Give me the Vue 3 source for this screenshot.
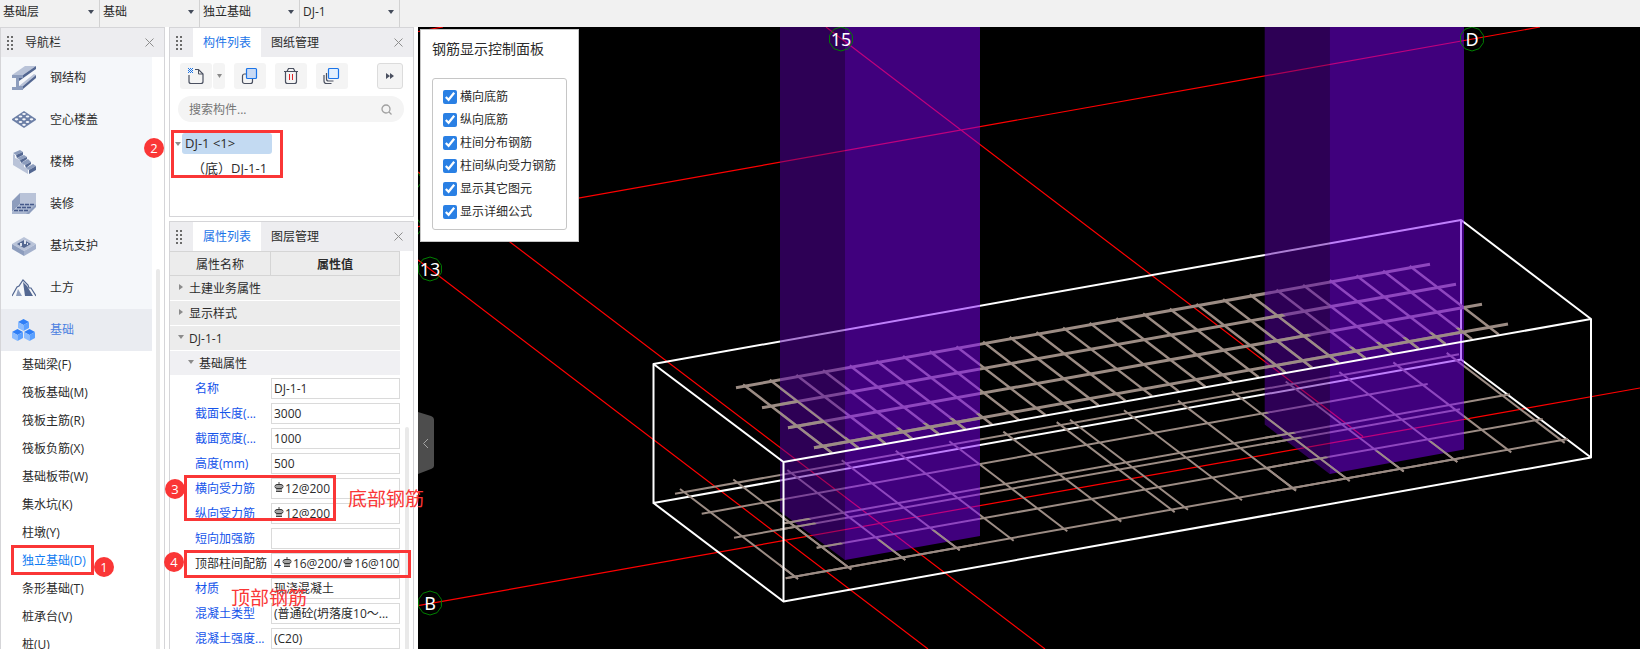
<script setup>
  import { ref } from 'vue'

  const selectors = [
    { label: '楼层', value: '基础层' },
    { label: '构件大类', value: '基础' },
    { label: '构件类型', value: '独立基础' },
    { label: '构件', value: 'DJ-1' },
  ]

  const modules = [
    { icon: 'steel', name: '钢结构' },
    { icon: 'slab', name: '空心楼盖' },
    { icon: 'stairs', name: '楼梯' },
    { icon: 'finish', name: '装修' },
    { icon: 'pit', name: '基坑支护' },
    { icon: 'earth', name: '土方' },
    { icon: 'base', name: '基础' },
  ]

  const elements = [
    '基础梁(F)', '筏板基础(M)', '筏板主筋(R)', '筏板负筋(X)', '基础板带(W)', '集水坑(K)',
    '柱墩(Y)', '独立基础(D)', '条形基础(T)', '桩承台(V)', '桩(U)',
  ]

  const groups = [
    { name: '土建业务属性', open: false },
    { name: '显示样式', open: false },
    { name: 'DJ-1-1', open: true },
    { name: '基础属性', open: true, nested: true },
  ]

  // '#' stands for the rebar grade symbol
  const props = [
    { name: '名称', value: ['DJ-1-1'] },
    { name: '截面长度(...', value: ['3000'] },
    { name: '截面宽度(...', value: ['1000'] },
    { name: '高度(mm)', value: ['500'] },
    { name: '横向受力筋', value: ['#', '12@200'] },
    { name: '纵向受力筋', value: ['#', '12@200'] },
    { name: '短向加强筋', value: [''] },
    { name: '顶部柱间配筋', value: ['4', '#', '16@200/', '#', '16@100'], plain: true },
    { name: '材质', value: ['现浇混凝土'] },
    { name: '混凝土类型', value: ['(普通砼(坍落度10～...'] },
    { name: '混凝土强度...', value: ['(C20)'] },
  ]

  const toggles = ref([
    { name: '横向底筋', on: true },
    { name: '纵向底筋', on: true },
    { name: '柱间分布钢筋', on: true },
    { name: '柱间纵向受力钢筋', on: true },
    { name: '显示其它图元', on: true },
    { name: '显示详细公式', on: true },
  ])

  const activeModule = ref('基础')
  const activeElement = ref('独立基础(D)')

  const axisLines = [
    [418, 260, 928, 649],
    [418, 172, 1045, 649],
    [826, 27, 1363, 436.5],
    [418, 605.7, 1640, 388],
    [418, 226.7, 1540, 27],
    [418, 31.5, 443, 27],
  ]

  const axisMarks = [
    { x: 430, y: 269, text: '13' },
    { x: 430, y: 603, text: 'B' },
    { x: 841, y: 39, text: '15' },
    { x: 1472, y: 39, text: 'D' },
    { x: 409, y: 180, text: '' },
    { x: 409, y: 227, text: '' },
  ]

  const topLong = [
    [736, 387.7, 1430, 264.3],
    [762, 407.7, 1456, 284.3],
    [788, 427.7, 1482, 304.3],
    [814, 447.7, 1508, 324],
  ]

  const topCross = Array.from({ length: 26 }, (_, i) => {
    const x = 743 + i * 26.67
    const y = 384.5 - i * 4.74
    return [x, y, x + 89, y + 68.5]
  })

  const bottomLong = [
    [675, 493.7, 1459, 354.3],
    [701.7, 513.7, 1427.7, 384],
    [734, 537.7, 1460, 409.3],
    [783, 523.5, 1510, 394.3],
    [816.7, 547.7, 1542.7, 419],
    [785.7, 578.3, 1568, 439],
  ]

  const bottomCross = [
    680, 733.3, 787.3, 841.7, 895.7, 949.3, 1003.3, 1056.7,
    1070, 1124, 1178, 1231.7, 1285.7, 1339.3, 1393.3, 1446.7,
  ].map((x) => {
    const y = 489 - (x - 680) * 0.1775
    return [x, y, x + 118, y + 90]
  })

  function toPath(lines) {
    return lines.map(([x1, y1, x2, y2]) => `M${x1} ${y1}L${x2} ${y2}`).join('')
  }

  function ring(cx, cy) {
    return Array.from({ length: 10 }, (_, i) => {
      const a = (i * 36 - 90) * Math.PI / 180
      return `${(cx + 12 * Math.cos(a)).toFixed(1)},${(cy + 12 * Math.sin(a)).toFixed(1)}`
    }).join(' ')
  }
</script>

<template>
  <div class="app">
    <header class="topbar">
      <div v-for="item in selectors" :key="item.label" class="picker">
        <select :aria-label="item.label">
          <option>{{ item.value }}</option>
        </select>
        <svg width="6" height="4" viewBox="0 0 6 4"><path d="M0 0H6L3 4Z" fill="#444b5a" /></svg>
      </div>
    </header>

    <div class="body">
      <nav class="nav">
        <div class="panel-head">
          <i class="grip"></i>
          <span class="nav-title">导航栏</span>
          <button class="close" aria-label="关闭导航栏">
            <svg width="9" height="9" viewBox="0 0 9 9"><path d="M.5 .5L8.500 8.500M8.500 .5L.5 8.500" stroke="#8d8d8d" fill="none" /></svg>
          </button>
        </div>
        <div class="nav-body">
          <div class="nav-list">
            <button
              v-for="item in modules"
              :key="item.name"
              class="module"
              :class="{ active: item.name === activeModule }"
              @click="activeModule = item.name"
            >
              <svg width="24" height="24" viewBox="0 0 24 24">
                <g v-if="item.icon === 'steel'">
                  <path d="M0 9L13 0H24L11 9Z" fill="#b9c3d8" />
                  <path d="M0 9H11V12H7V20H11V24H0V21H4V12H0Z" fill="#8d9dbd" />
                  <path d="M11 9L24 0V3L7 15V12H11Z" fill="#536791" />
                  <path d="M7 20L22 8L24 9L11 20Z" fill="#b9c3d8" />
                  <path d="M11 20L24 9V12L11 23Z" fill="#536791" />
                </g>
                <g v-else-if="item.icon === 'slab'">
                  <path d="M12 3L24 11V12L12 20L0 12V11Z" fill="#6c7fa6" />
                  <g fill="#f5f7fa">
                    <ellipse cx="12" cy="6" rx="1.800" ry="1.100" />
                    <ellipse cx="8.500" cy="8.500" rx="1.800" ry="1.100" /><ellipse cx="15.500" cy="8.500" rx="1.800" ry="1.100" />
                    <ellipse cx="4.500" cy="11.300" rx="1.800" ry="1.100" /><ellipse cx="12" cy="11.300" rx="1.800" ry="1.100" /><ellipse cx="19.500" cy="11.300" rx="1.800" ry="1.100" />
                    <ellipse cx="8.500" cy="14" rx="1.800" ry="1.100" /><ellipse cx="15.500" cy="14" rx="1.800" ry="1.100" />
                    <ellipse cx="12" cy="16.800" rx="1.800" ry="1.100" />
                  </g>
                </g>
                <g v-else-if="item.icon === 'stairs'">
                  <path d="M1 4L3 5V8L8 10V13L12 14V17L16 19V24L1 15Z" fill="#b9c3d8" />
                  <path d="M1 3L8 0L11 2L4 5ZM5 8L12 5L15 7L8 10ZM9 13L16 9L19 12L13 15ZM14 18L21 14L24 16L17 20Z" fill="#8d9dbd" />
                  <path d="M4 5L11 2V5L5 8ZM8 10L15 7V9L9 13ZM13 15L19 12V14L14 18ZM17 20L24 16V20L17 24Z" fill="#536791" />
                </g>
                <g v-else-if="item.icon === 'finish'">
                  <path d="M0 9L8 1V12L0 20Z" fill="#8d9dbd" />
                  <path d="M8 1H24V12H8Z" fill="#b9c3d8" />
                  <path d="M8 12H24L17 22H0V20Z" fill="#a9b6cf" />
                  <path d="M24 12V15L17 22H14Z" fill="#8d9dbd" />
                  <path d="M8 12.500H22M5 15.500H20M2 18.500H17" stroke="#45598a" stroke-width="1.500" stroke-dasharray="4 1" />
                </g>
                <g v-else-if="item.icon === 'pit'">
                  <path d="M12 3L24 10L12 17L0 10Z" fill="#b9c3d8" />
                  <path d="M0 10L12 17V22L0 15Z" fill="#8d9dbd" />
                  <path d="M24 10L12 17V22L24 15Z" fill="#a4b1cc" />
                  <path d="M12 6L19 10L12 14L5 10Z" fill="#536791" />
                  <path d="M8 9H10V12H8ZM12 6H14V10H12ZM15 9H16V11H15Z" fill="#dce2ed" />
                </g>
                <g v-else-if="item.icon === 'earth'">
                  <path d="M0 20L5 11L7 10L11 4L16 9L17 12L19 12L24 20" fill="none" stroke="#536791" stroke-width="1.200" />
                  <path d="M11 6L15 10L21 20H13Z" fill="#536791" />
                  <path d="M6 13L10 20H4Z" fill="#8d9dbd" />
                </g>
                <g v-else>
                  <g v-for="(p, i) in [[6, 1], [0, 11], [12, 11]]" :key="i" :transform="`translate(${p[0]} ${p[1]})`">
                    <path d="M0 3L5.500 0L11 3L5.500 6Z" fill="#2f7ff7" />
                    <path d="M0 3L5.500 6V12L0 9Z" fill="#8bbcff" />
                    <path d="M11 3L5.500 6V12L11 9Z" fill="#5ba0ff" />
                  </g>
                </g>
              </svg>
              {{ item.name }}
            </button>
            <button
              v-for="name in elements"
              :key="name"
              class="element"
              :class="{ active: name === activeElement }"
              @click="activeElement = name"
            >{{ name }}</button>
          </div>
          <div class="nav-scroll"><i></i></div>
        </div>
      </nav>

      <div class="side">
        <section class="panel list-panel">
          <div class="panel-head">
            <i class="grip"></i>
            <button class="tab on">构件列表</button>
            <button class="tab">图纸管理</button>
            <button class="close" aria-label="关闭构件列表">
              <svg width="9" height="9" viewBox="0 0 9 9"><path d="M.5 .5L8.500 8.500M8.500 .5L.5 8.500" stroke="#8d8d8d" fill="none" /></svg>
            </button>
          </div>
          <div class="tools">
            <div class="split">
              <button class="tool" aria-label="新建">
                <svg width="18" height="18" viewBox="0 0 18 18" fill="none">
                  <path d="M2 8V14.500Q2 16.500 4 16.500H14Q16 16.500 16 14.500V7L11.500 2.500H8" stroke="#4a5060" stroke-width="1.200" />
                  <path d="M11.500 3V7H16" stroke="#4a5060" />
                  <path d="M1 1.500H6M1 3.500H6M1 5.500H6" stroke="#1b74e8" stroke-dasharray="1 1" />
                  <path d="M2 2.500H6M2 4.500H6" stroke="#1b74e8" stroke-dasharray="1 1" />
                </svg>
              </button>
              <button class="tool more" aria-label="新建选项">
                <svg width="5" height="4" viewBox="0 0 5 4"><path d="M0 0H5L2.500 4Z" fill="#8b8b8b" /></svg>
              </button>
            </div>
            <button class="tool" aria-label="复制">
              <svg width="18" height="18" viewBox="0 0 18 18">
                <rect x="1.500" y="7" width="10" height="9.500" rx="2" fill="none" stroke="#4a5060" stroke-width="1.200" />
                <rect x="5.500" y="1.500" width="10" height="10" rx="1" fill="#c9daf4" stroke="#1b74e8" stroke-width="1.200" />
              </svg>
            </button>
            <button class="tool" aria-label="删除">
              <svg width="18" height="18" viewBox="0 0 18 18" fill="none">
                <path d="M2 4.500H16M5 4.500L6.500 1.500H11.500L13 4.500M3.500 4.500V14.500Q3.500 16.500 5.500 16.500H12.500Q14.500 16.500 14.500 14.500V4.500" stroke="#4a5060" stroke-width="1.200" />
                <path d="M7.500 7V13M10.500 7V13" stroke="#e0262b" stroke-width="1" />
              </svg>
            </button>
            <button class="tool" aria-label="层间复制">
              <svg width="18" height="18" viewBox="0 0 18 18">
                <path d="M3.500 6V12Q3.500 14 5.500 14H10.500M1 8V14Q1 16.500 3.500 16.500H8.500" fill="none" stroke="#4a5060" stroke-width="1.200" />
                <rect x="5.500" y="1.500" width="10" height="10" rx="1" fill="#e4f0fe" stroke="#1b74e8" stroke-width="1.200" />
              </svg>
            </button>
            <button class="tool expand" aria-label="更多">
              <svg width="8" height="6" viewBox="0 0 8 6"><path d="M0 0L4 3L0 6ZM4 0L8 3L4 6Z" fill="#4a5060" /></svg>
            </button>
          </div>
          <div class="search">
            <input type="text" placeholder="搜索构件..." aria-label="搜索构件">
            <svg width="11" height="11" viewBox="0 0 11 11" fill="none" stroke="#a0a0a0" stroke-width="1.300"><circle cx="5" cy="5" r="4" /><path d="M8 8L10.500 10.500" /></svg>
          </div>
          <ul class="tree">
            <li class="node">
              <svg width="6" height="4" viewBox="0 0 6 4"><path d="M0 0H6L3 4Z" fill="#8b8b8b" /></svg>
              <span class="node-name">DJ-1 &lt;1&gt;</span>
            </li>
            <li class="leaf">（底）DJ-1-1</li>
          </ul>
        </section>

        <section class="panel prop-panel">
          <div class="panel-head">
            <i class="grip"></i>
            <button class="tab on">属性列表</button>
            <button class="tab">图层管理</button>
            <button class="close" aria-label="关闭属性列表">
              <svg width="9" height="9" viewBox="0 0 9 9"><path d="M.5 .5L8.500 8.500M8.500 .5L.5 8.500" stroke="#8d8d8d" fill="none" /></svg>
            </button>
          </div>
          <div class="prop-body">
            <table>
              <colgroup>
                <col class="col-name">
                <col>
              </colgroup>
              <thead>
                <tr>
                  <th>属性名称</th>
                  <th class="strong">属性值</th>
                </tr>
              </thead>
              <tbody>
                <tr v-for="group in groups" :key="group.name" class="group" :class="{ nested: group.nested }">
                  <td colspan="2">
                    <svg width="6" height="6" viewBox="0 0 6 6">
                      <path :d="group.open ? 'M0 1H6L3 5Z' : 'M1 0L5 3L1 6Z'" fill="#8b8b8b" />
                    </svg>
                    {{ group.name }}
                  </td>
                </tr>
                <tr v-for="(prop, i) in props" :key="prop.name" class="prop">
                  <td><label :for="`prop-${i}-0`" :class="{ plain: prop.plain }">{{ prop.name }}</label></td>
                  <td>
                    <div class="field">
                      <template v-for="(part, j) in prop.value" :key="j">
                        <svg v-if="part === '#'" width="10" height="14" viewBox="0 0 10 14" fill="none" stroke="#333">
                          <path d="M5 1V11M3 3.500V10M7 3.500V10M2 10.500H8" stroke-width=".9" />
                          <rect x="1" y="3.500" width="8" height="4" rx="2" />
                        </svg>
                        <input
                          v-else
                          :id="prop.value[0] === '#' ? `prop-${i}-${j - 1}` : `prop-${i}-${j}`"
                          type="text"
                          :aria-label="j > 1 ? prop.name : null"
                          :value="part"
                          :class="{ fill: prop.value.length === 1 }"
                        >
                      </template>
                    </div>
                  </td>
                </tr>
              </tbody>
            </table>
            <div class="prop-scroll"><i></i></div>
          </div>
        </section>
      </div>

      <main class="stage">
        <svg class="scene" viewBox="418 27 1222 622" preserveAspectRatio="xMinYMin slice">
          <defs>
            <g id="top-mesh">
              <path class="bar bar-top" :d="toPath(topLong)" />
              <path class="bar bar-cross" :d="toPath(topCross)" />
            </g>
            <path id="bottom-mesh" class="bar bar-bottom" :d="toPath([...bottomLong, ...bottomCross])" />
            <!-- the parts of each mesh that stand in front of the two columns -->
            <clipPath id="front-top">
              <path d="M780 386.500L845 437L980 413V600H780ZM1264.700 300L1329.700 350.500L1464 326.500V520H1264.700Z" />
            </clipPath>
            <clipPath id="front-bottom">
              <path d="M780 496L845 545.500L980 521.500V600H780ZM1264.700 410L1329.700 459L1464 435V520H1264.700Z" />
            </clipPath>
          </defs>

          <path class="axis" :d="toPath(axisLines)" />
          <path class="edge" d="M653.500 364L1461 220V359.500L653.500 503ZM1461 220L1591 319V457.500L1461 359.500M653.500 503L783.500 601.500L1591 457.500" />
          <use href="#bottom-mesh" />
          <use href="#top-mesh" />

          <path class="col-dark" d="M780 27H845V560L780 511.500ZM1264.700 27H1329.700V474L1264.700 424.500Z" />
          <path class="col-light" d="M845 27H980V536L845 560ZM1329.700 27H1464V449.500L1329.700 474Z" />

          <use href="#bottom-mesh" clip-path="url(#front-bottom)" />
          <use href="#top-mesh" clip-path="url(#front-top)" />
          <path class="edge" d="M653.500 364L783.500 462V601.500M783.500 462L1591 319" />

          <g v-for="mark in axisMarks" :key="`${mark.x}-${mark.y}`">
            <polygon class="ring" :points="ring(mark.x, mark.y)" />
            <text class="mark" :x="mark.x" :y="mark.y + 7">{{ mark.text }}</text>
          </g>
        </svg>

        <button class="handle" aria-label="收起侧栏">
          <svg width="16" height="62" viewBox="0 0 16 62">
            <path d="M0 0L13 4Q16 5 16 8V54Q16 56 13 57L0 62Z" fill="#4d4d4d" />
            <path d="M10 27L5.500 31.500L10 36" fill="none" stroke="#a5a5a5" />
          </svg>
        </button>

        <form class="control">
          <h2>钢筋显示控制面板</h2>
          <div class="control-box">
            <label v-for="item in toggles" :key="item.name">
              <input v-model="item.on" type="checkbox">
              {{ item.name }}
            </label>
          </div>
        </form>
      </main>
    </div>

    <div class="notes">
      <i class="frame frame-1"></i>
      <i class="frame frame-2"></i>
      <i class="frame frame-3"></i>
      <i class="frame frame-4"></i>
      <b class="badge badge-1">1</b>
      <b class="badge badge-2">2</b>
      <b class="badge badge-3">3</b>
      <b class="badge badge-4">4</b>
      <span class="remark remark-bottom">底部钢筋</span>
      <span class="remark remark-top">顶部钢筋</span>
    </div>
  </div>
</template>

<style>
  body {
    background: #fff;
    overflow: hidden;
  }
</style>

<style scoped>
  * {
    box-sizing: border-box;
  }

  .app {
    position: relative;
    height: 100vh;
    display: flex;
    flex-direction: column;
    overflow: hidden;
    font-family: "Open Sans", "Noto Sans CJK SC", sans-serif;
    font-size: 12px;
    line-height: 18px;
    color: #2b2b2b;
  }

  button,
  input,
  select {
    margin: 0;
    padding: 0;
    border: none;
    outline: none;
    background: none;
    font: inherit;
    color: inherit;
  }

  svg {
    display: block;
    flex: none;
  }

  .topbar {
    flex: none;
    display: flex;
    height: 27px;
    background: #f1f1f1;
  }

  .picker {
    width: 100px;
    display: flex;
    align-items: center;
    padding: 0 5px 4px 3px;
    border-right: 1px solid #d2d2d2;
  }

  .picker select {
    flex: 1;
    min-width: 0;
    appearance: none;
  }

  .body {
    flex: 1;
    min-height: 0;
    display: flex;
  }

  .nav {
    flex: none;
    width: 165px;
    display: flex;
    flex-direction: column;
    border: 1px solid #d5d5d8;
    border-bottom: none;
  }

  .panel-head {
    flex: none;
    height: 29px;
    display: flex;
    align-items: center;
    padding: 0 10px 0 5px;
    background: #ededf0;
  }

  .grip {
    width: 7px;
    height: 15px;
    background: radial-gradient(circle, #6b6b6b 1px, transparent 1px) 0 0 / 4px 4px;
  }

  .nav-title {
    margin-left: 12px;
  }

  .close {
    margin-left: auto;
    cursor: pointer;
  }

  .nav-body {
    flex: 1;
    min-height: 0;
    display: flex;
    overflow: hidden;
  }

  .nav-list {
    width: 151px;
  }

  .module {
    width: 100%;
    height: 42px;
    display: flex;
    align-items: center;
    gap: 14px;
    padding-left: 11px;
    background: #f5f7fa;
    cursor: pointer;
  }

  .module.active {
    background: #eaecf1;
    color: #4a80e0;
  }

  .element {
    width: 100%;
    height: 28px;
    display: block;
    padding-left: 21px;
    text-align: left;
    cursor: pointer;
  }

  .element.active {
    color: #0f7bf2;
  }

  .nav-scroll {
    padding: 212px 0 0 4px;
    display: flex;
  }

  .nav-scroll i,
  .prop-scroll i {
    width: 4px;
    border-radius: 2px 2px 0 0;
    background: #e9e9e9;
  }

  .side {
    flex: none;
    width: 253px;
    display: flex;
    flex-direction: column;
    gap: 4px;
    padding: 0 4px;
  }

  .panel {
    border: 1px solid #d5d5d8;
  }

  .list-panel {
    flex: none;
    height: 190px;
  }

  .prop-panel {
    flex: 1;
    min-height: 0;
    display: flex;
    flex-direction: column;
    border-bottom: none;
  }

  .tab {
    height: 100%;
    padding: 0 10px;
  }

  .tab.on {
    margin-left: 11px;
    background: #fff;
    color: #1b74e8;
  }

  .tools {
    display: flex;
    gap: 9px;
    padding: 6px 10px 7px;
  }

  .split {
    display: flex;
    gap: 1px;
  }

  .tool {
    width: 32px;
    height: 26px;
    display: flex;
    align-items: center;
    justify-content: center;
    border-radius: 3px;
    background: #f4f4f4;
    cursor: pointer;
  }

  .tool.more {
    width: 12px;
  }

  .tool.expand {
    width: 26px;
    margin-left: auto;
    border: 1px solid #dcdcdc;
  }

  .search {
    height: 26px;
    display: flex;
    align-items: center;
    margin: 0 9px 0 8px;
    padding: 1px 12px 0 11px;
    border-radius: 13px;
    background: #f4f4f4;
  }

  .search input {
    flex: 1;
    min-width: 0;
  }

  .search input::placeholder {
    color: #757575;
  }

  .tree {
    margin: 0;
    padding: 11px 5px;
    list-style: none;
    font-size: 13px;
  }

  .node {
    display: flex;
    align-items: center;
    gap: 1px;
  }

  .node-name {
    width: 90px;
    height: 21px;
    padding-left: 3px;
    border-radius: 3px;
    background: #c3daf2;
    line-height: 21px;
  }

  .leaf {
    padding: 5px 0 0 17px;
  }

  .prop-body {
    flex: 1;
    min-height: 0;
    display: flex;
    overflow: hidden;
  }

  table {
    width: 230px;
    height: 0;
    table-layout: fixed;
    border-collapse: separate;
    border-spacing: 0;
  }

  .col-name {
    width: 101px;
  }

  tr {
    height: 25px;
  }

  th,
  td {
    height: 25px;
    padding: 0;
    white-space: nowrap;
  }

  th {
    padding-top: 2px;
    background: #ececec;
    border: solid #d5d5d5;
    border-width: 1px 1px 1px 0;
    font-weight: 400;
  }

  th.strong {
    font-weight: 700;
  }

  .group td {
    padding: 2px 0 0 23px;
    background: #ececec;
    border-bottom: 1px solid #fff;
  }

  .group.nested td {
    padding-left: 33px;
    background: #f0f0f3;
  }

  .group svg {
    display: inline-block;
    margin: 0 2px 3px -15px;
  }

  .prop label {
    padding-left: 25px;
    color: #1554ea;
  }

  .prop label.plain {
    color: #2b2b2b;
  }

  .field {
    height: 21px;
    display: flex;
    align-items: center;
    padding-left: 1px;
    border: 1px solid #dadada;
    overflow: hidden;
  }

  .field input {
    flex: none;
    field-sizing: content;
    padding-left: 1px;
  }

  .field input.fill {
    width: 100%;
  }

  .field svg {
    margin: 0 0 2px 1px;
  }

  .prop-scroll {
    padding: 176px 0 0 5px;
    display: flex;
  }

  .stage {
    position: relative;
    flex: 1;
    min-width: 0;
    background: #000;
  }

  .scene {
    width: 100%;
    height: 100%;
  }

  .axis {
    fill: none;
    stroke: #ff0000;
    stroke-width: 1.2;
  }

  .edge {
    fill: none;
    stroke: #fff;
    stroke-width: 2;
    stroke-linejoin: round;
  }

  .bar {
    fill: none;
    stroke: #9c8c84;
  }

  .bar-top {
    stroke-width: 3;
  }

  .bar-cross {
    stroke-width: 2.5;
  }

  .bar-bottom {
    stroke-width: 2;
  }

  .col-dark {
    fill: rgba(90, 0, 170, 0.5);
  }

  .col-light {
    fill: rgba(127, 0, 250, 0.5);
  }

  .ring {
    fill: none;
    stroke: #008000;
  }

  .mark {
    fill: #fff;
    font-family: "Noto Sans", sans-serif;
    font-size: 18px;
    text-anchor: middle;
  }

  .handle {
    position: absolute;
    left: 0;
    top: 385px;
    cursor: pointer;
  }

  .control {
    position: absolute;
    left: 2px;
    top: 2px;
    width: 159px;
    padding: 9px 11px 11px;
    border: 1px solid #c6c6c6;
    background: #fff;
  }

  .control h2 {
    margin: 0 0 19px;
    font-size: 14px;
    line-height: 20px;
    font-weight: 400;
  }

  .control-box {
    display: flex;
    flex-direction: column;
    gap: 5px;
    padding: 9px 10px 8px;
    border: 1px solid #c6c6c6;
    border-radius: 3px;
  }

  .control-box label {
    display: flex;
    align-items: center;
    gap: 3px;
    white-space: nowrap;
  }

  .control-box input {
    flex: none;
    width: 14px;
    height: 14px;
    accent-color: #2a80e4;
  }

  .notes {
    position: absolute;
    inset: 0;
    pointer-events: none;
    color: #fa3636;
  }

  .frame {
    position: absolute;
    border: 3px solid #fa3636;
  }

  .frame-1 {
    left: 11px;
    top: 545px;
    width: 83px;
    height: 30px;
  }

  .frame-2 {
    left: 171px;
    top: 130px;
    width: 112px;
    height: 48px;
  }

  .frame-3 {
    left: 184px;
    top: 475px;
    width: 152px;
    height: 46px;
  }

  .frame-4 {
    left: 184px;
    top: 550px;
    width: 227px;
    height: 28px;
  }

  .badge {
    position: absolute;
    width: 20px;
    height: 20px;
    border-radius: 50%;
    background: #fa3636;
    color: #fff;
    font-size: 13px;
    font-weight: 400;
    line-height: 20px;
    text-align: center;
  }

  .badge-1 {
    left: 94px;
    top: 557px;
  }

  .badge-2 {
    left: 144px;
    top: 138px;
  }

  .badge-3 {
    left: 165px;
    top: 479px;
  }

  .badge-4 {
    left: 164px;
    top: 552px;
  }

  .remark {
    position: absolute;
    font-size: 19px;
    line-height: 26px;
    white-space: nowrap;
  }

  .remark-bottom {
    left: 348px;
    top: 486px;
  }

  .remark-top {
    left: 231px;
    top: 585px;
  }
</style>
